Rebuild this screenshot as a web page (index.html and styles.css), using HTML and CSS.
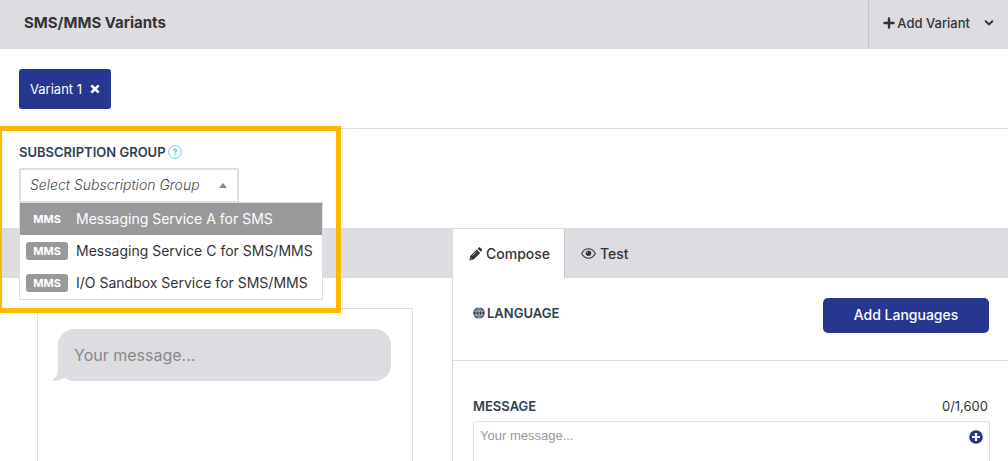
FILE: index.html
```html
<!DOCTYPE html>
<html lang="en">
<head>
<meta charset="utf-8">
<meta name="viewport" content="width=device-width, initial-scale=1">
<title>SMS/MMS Variants</title>
<link rel="stylesheet" href="styles.css">
</head>
<body>
<header class="topbar">
  <h1 class="topbar-title">SMS/MMS Variants</h1>
  <button class="add-variant" type="button">
    <svg class="icon-plus" viewBox="0 0 12 12" aria-hidden="true"><path d="M6 1.500v9M1.500 6h9" fill="none" stroke="currentColor" stroke-width="2.400" stroke-linecap="round"/></svg>
    <span>Add Variant</span>
    <svg class="icon-chevron" viewBox="0 0 10 6" aria-hidden="true"><path d="M1.700 1.300L5 4.400l3.300-3.100" fill="none" stroke="currentColor" stroke-width="2" stroke-linecap="round"/></svg>
  </button>
</header>

<section class="variants">
  <button class="variant-chip" type="button">
    <span>Variant 1</span>
    <svg class="icon-close" viewBox="0 0 10 10" aria-hidden="true"><path d="M1.300 1.300l7.400 7.400M8.700 1.300L1.300 8.700" fill="none" stroke="currentColor" stroke-width="2.600"/></svg>
  </button>
</section>

<section class="subscription">
  <div class="field-head">
    <label class="field-label" for="group">SUBSCRIPTION GROUP</label>
    <svg class="icon-help" viewBox="0 0 14 14" aria-hidden="true"><circle cx="7" cy="7" r="6.400" fill="none" stroke="currentColor" stroke-width=".8"/><path d="M5.600 5.800c0-1.900 2.900-1.800 2.900-.2 0 1-1.400 1-1.400 2.100M7.100 8.700v1.200" fill="none" stroke="currentColor" stroke-width="1.300"/></svg>
  </div>
  <div class="picker">
    <select class="picker-select" id="group">
      <option>Select Subscription Group</option>
    </select>
    <svg class="picker-caret" viewBox="0 0 8 5" aria-hidden="true"><path d="M0 5l4-5 4 5z" fill="currentColor"/></svg>
    <ul class="menu" role="listbox" aria-label="Subscription groups">
      <li class="menu-item menu-item-active" role="option" aria-selected="true"><span class="tag">MMS</span>Messaging Service A for SMS</li>
      <li class="menu-item" role="option" aria-selected="false"><span class="tag">MMS</span>Messaging Service C for SMS/MMS</li>
      <li class="menu-item" role="option" aria-selected="false"><span class="tag">MMS</span>I/O Sandbox Service for SMS/MMS</li>
    </ul>
  </div>
  <div class="highlight"></div>
</section>

<main class="workspace">
  <section class="preview">
    <div class="preview-bar"></div>
    <div class="phone">
      <div class="bubble">Your message...
        <svg class="bubble-tail" viewBox="0 0 20 18" aria-hidden="true"><path d="M6 0v6c0 5-2 9-6 11.500 5 .6 9-.4 12.500-3L20 8V0z" fill="currentColor"/></svg>
      </div>
    </div>
  </section>

  <section class="editor">
    <div class="tabs" role="tablist">
      <button class="tab tab-active" type="button" role="tab" aria-selected="true">
        <svg class="icon-pencil" viewBox="0 0 13 14" aria-hidden="true"><path d="M.3 13.500l.9-4.400 6.600-6.600 3.400 3.400-6.600 6.600zM8.600 1.700l1-1c.5-.5 1.200-.5 1.700 0l1.400 1.400c.5.5.5 1.200 0 1.700l-.9 1z" fill="currentColor"/><path d="M3.500 8.600l4-4M1.300 11l1.500 1.500" fill="none" stroke="#fff" stroke-width=".6"/></svg>
        Compose
      </button>
      <button class="tab" type="button" role="tab" aria-selected="false">
        <svg class="icon-eye" viewBox="0 0 15 11" aria-hidden="true"><path d="M.7 5.500C2.300 2.400 4.700.8 7.500.8s5.200 1.600 6.800 4.700c-1.600 3.100-4 4.700-6.800 4.700S2.300 8.600.7 5.500z" fill="none" stroke="currentColor" stroke-width="1.100"/><circle cx="7.500" cy="5.300" r="2.700" fill="currentColor"/><path d="M6 5c0-.9.6-1.400 1.400-1.500" fill="none" stroke="#dddce1" stroke-width=".7"/></svg>
        Test
      </button>
    </div>
    <div class="language">
      <h2 class="field-label language-title">
        <svg class="icon-globe" viewBox="0 0 12 12" aria-hidden="true"><circle cx="6" cy="6" r="5.800" fill="currentColor"/><path d="M6 0v12M.8 4h10.400M.8 8h10.400M6 .3c-4 3.500-4 8 0 11.400M6 .3c4 3.500 4 8 0 11.400" fill="none" stroke="#fff" stroke-width=".6"/></svg>
        LANGUAGE
      </h2>
      <button class="add-languages" type="button">Add Languages</button>
    </div>
    <div class="message">
      <div class="message-head">
        <label class="field-label" for="message">MESSAGE</label>
        <span class="counter">0/1,600</span>
      </div>
      <div class="message-box">
        <textarea class="message-input" id="message" placeholder="Your message..."></textarea>
        <button class="insert" type="button" aria-label="Insert">
          <svg class="icon-insert" viewBox="0 0 14 14" aria-hidden="true"><circle cx="7" cy="7" r="6.800" fill="currentColor"/><path d="M7 3v8M3 7h8" stroke="#fff" stroke-width="2.200"/></svg>
        </button>
      </div>
    </div>
  </section>
</main>
</body>
</html>
```

FILE: styles.css
```css
* {
  box-sizing: border-box;
}

body {
  display: flex;
  flex-direction: column;
  height: 100vh;
  margin: 0;
  overflow: hidden;
  background: #fff;
  color: #333335;
  font-family: Inter, "Liberation Sans", sans-serif;
  font-size: 14px;
}

button {
  padding: 0;
  border: 0;
  background: none;
  color: inherit;
  font: inherit;
  cursor: pointer;
}

svg {
  display: block;
  flex: none;
}

.topbar {
  display: flex;
  flex: none;
  justify-content: space-between;
  height: 49px;
  padding-left: 24px;
  background: #dddce1;
}

.topbar-title {
  margin: 0;
  font-size: 15px;
  font-weight: 700;
  line-height: 46px;
}

.add-variant {
  display: flex;
  align-items: center;
  gap: 2px;
  height: 48px;
  padding: 0 14px 2px;
  border-left: 1px solid #c4c4c9;
  font-size: 13px;
  font-weight: 500;
}

.icon-plus {
  width: 12px;
  height: 12px;
}

.icon-chevron {
  width: 10px;
  height: 6px;
  margin-left: 12px;
}

.variants {
  flex: none;
  padding: 20px 19px 19px;
  border-bottom: 1px solid #dddce1;
}

.variant-chip {
  display: flex;
  align-items: center;
  gap: 8px;
  height: 40px;
  padding: 0 11px;
  border-radius: 3px;
  background: #27368f;
  color: #fff;
  font-size: 13px;
}

.icon-close {
  width: 10px;
  height: 10px;
}

.subscription {
  position: relative;
  z-index: 1;
  flex: none;
  height: 99px;
  padding: 15px 19px 0;
}

.field-head {
  display: flex;
  align-items: center;
  gap: 2px;
  height: 16px;
  margin-bottom: 8px;
}

.field-label {
  margin: 0;
  color: #2f3f4f;
  font-size: 13px;
  font-weight: 600;
  line-height: 16px;
}

.icon-help {
  width: 14px;
  height: 14px;
  color: #3accc4;
}

.picker {
  position: relative;
  width: 220px;
}

.picker-select {
  display: block;
  width: 100%;
  height: 35px;
  padding: 0 24px 2px 10px;
  border: 1px solid #dddce1;
  border-radius: 2px 2px 0 0;
  outline: 1px dotted #c8c7cd;
  outline-offset: -2px;
  appearance: none;
  background: #fff;
  color: #4b4b4d;
  font-family: inherit;
  font-size: 14px;
  font-style: italic;
  font-weight: 300;
}

.picker-caret {
  position: absolute;
  top: 15px;
  right: 12px;
  width: 8px;
  height: 5px;
  color: #88888a;
}

.menu {
  position: absolute;
  top: 34px;
  left: 0;
  width: 304px;
  margin: 0;
  padding: 0;
  border: 1px solid #dddce1;
  background: #fff;
  list-style: none;
}

.menu-item {
  display: flex;
  align-items: center;
  gap: 8px;
  height: 32px;
  padding-bottom: 1px;
  padding-left: 6px;
  font-size: 14px;
  white-space: nowrap;
}

.menu-item-active {
  background: #99999b;
  color: #fff;
}

.tag {
  width: 42px;
  border-radius: 3px;
  background: #99999b;
  color: #fff;
  font-size: 11px;
  font-weight: 700;
  line-height: 18px;
  text-align: center;
}

.highlight {
  position: absolute;
  top: -3px;
  left: -3px;
  width: 344px;
  height: 187px;
  border: 5px solid #fbba00;
  pointer-events: none;
}

.workspace {
  display: grid;
  flex: 1;
  grid-template-columns: 452fr 556fr;
  min-height: 0;
}

.preview {
  display: flex;
  flex-direction: column;
}

.preview-bar {
  flex: none;
  height: 50px;
  background: #dddce1;
}

.phone {
  flex: 1;
  margin: 30px 39px 0 37px;
  padding: 20px 21px 0 20px;
  border: 1px solid #dddce1;
  border-bottom: 0;
}

.bubble {
  position: relative;
  padding: 0 16px;
  border-radius: 16px;
  background: #dddce1;
  color: #88888a;
  font-size: 16px;
  line-height: 52px;
}

.bubble-tail {
  position: absolute;
  bottom: 0;
  left: -6px;
  width: 20px;
  height: 18px;
  color: #dddce1;
}

.editor {
  display: flex;
  flex-direction: column;
  border-left: 1px solid #dddce1;
}

.tabs {
  display: flex;
  flex: none;
  height: 50px;
  border-top: 1px solid #dddce1;
  background: #dddce1;
}

.tab {
  display: flex;
  align-items: center;
  gap: 4px;
  padding: 0 16px;
  font-size: 14px;
  font-weight: 500;
}

.tab-active {
  padding-right: 14px;
  border-right: 1px solid #c4c4c9;
  background: #fff;
}

.icon-pencil {
  width: 13px;
  height: 14px;
}

.icon-eye {
  width: 15px;
  height: 11px;
}

.language {
  display: flex;
  flex: none;
  align-items: flex-start;
  justify-content: space-between;
  height: 83px;
  padding: 20px 19px 0 20px;
  border-bottom: 1px solid #dddce1;
}

.language-title {
  display: flex;
  align-items: center;
  gap: 2px;
  padding-top: 7px;
}

.icon-globe {
  width: 12px;
  height: 12px;
}

.add-languages {
  width: 166px;
  height: 35px;
  padding-bottom: 2px;
  border-radius: 5px;
  background: #27368f;
  color: #fff;
  font-size: 14px;
  font-weight: 500;
}

.message {
  display: flex;
  flex: 1;
  flex-direction: column;
  min-height: 0;
  padding: 37px 18px 0 20px;
}

.message-head {
  display: flex;
  align-items: flex-end;
  justify-content: space-between;
  margin-bottom: 7px;
}

.counter {
  padding-right: 2px;
  font-size: 13px;
  line-height: 16px;
}

.message-box {
  position: relative;
  display: flex;
  flex: 1;
  min-height: 0;
}

.message-input {
  flex: 1;
  width: 100%;
  padding: 6px 30px 6px 6px;
  border: 1px solid #dddce1;
  border-bottom: 0;
  border-radius: 3px 3px 0 0;
  outline: 0;
  resize: none;
  font-family: "Liberation Sans", Arial, sans-serif;
  font-size: 13px;
}

.message-input::placeholder {
  color: #99999b;
}

.insert {
  position: absolute;
  top: 9px;
  right: 7px;
  color: #27368f;
}

.icon-insert {
  width: 14px;
  height: 14px;
}
```
